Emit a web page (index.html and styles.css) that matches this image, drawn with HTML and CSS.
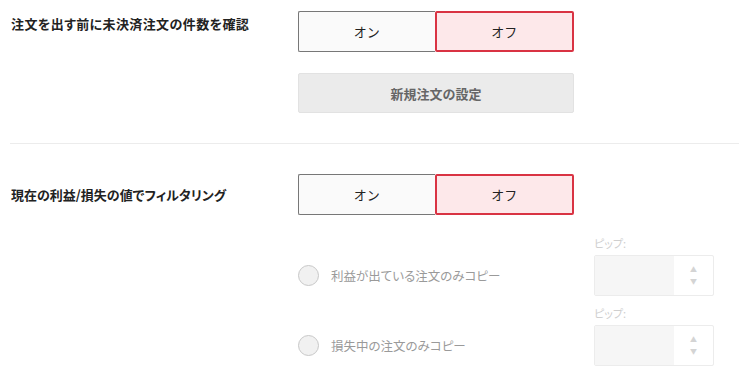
FILE: index.html
```html
<!DOCTYPE html>
<html lang="ja">
<head>
<meta charset="utf-8">
<link rel="stylesheet" href="styles.css">
</head>
<body>
<div class="page">
  <section class="block first">
    <div class="row">
      <div class="label top wide-label">注文を出す前に未決済注文の件数を確認</div>
      <div class="controls">
        <div class="toggle">
          <button class="opt">オン</button>
          <button class="opt active">オフ</button>
        </div>
        <button class="wide">新規注文の設定</button>
      </div>
    </div>
  </section>
  <hr class="divider">
  <section class="block second">
    <div class="row center">
      <div class="label">現在の利益/損失の値でフィルタリング</div>
      <div class="controls">
        <div class="toggle">
          <button class="opt">オン</button>
          <button class="opt active">オフ</button>
        </div>
      </div>
    </div>
    <div class="radios">
      <div class="radio-row">
        <div class="radio-item">
          <span class="circle"></span>
          <span class="radio-text">利益が出ている注文のみコピー</span>
        </div>
        <div class="spin-field">
          <div class="spin-label">ピップ:</div>
          <div class="spin">
            <div class="spin-value"></div>
            <div class="spin-arrows"><span>&#9650;</span><span>&#9660;</span></div>
          </div>
        </div>
      </div>
      <div class="radio-row">
        <div class="radio-item">
          <span class="circle"></span>
          <span class="radio-text">損失中の注文のみコピー</span>
        </div>
        <div class="spin-field">
          <div class="spin-label">ピップ:</div>
          <div class="spin">
            <div class="spin-value"></div>
            <div class="spin-arrows"><span>&#9650;</span><span>&#9660;</span></div>
          </div>
        </div>
      </div>
    </div>
  </section>
</div>
</body>
</html>
```

FILE: styles.css
```css
* { box-sizing: border-box; }
html, body { margin: 0; padding: 0; background: #fff; }
body {
  font-family: "Noto Sans CJK JP", "Noto Sans", sans-serif;
  color: #222;
  font-size: 13px;
}
.page { width: 739px; height: 381px; overflow: hidden; }

.block.first { padding: 11px 0 0 0; }
.row { display: flex; align-items: flex-start; }
.row.center { align-items: center; }
.label {
  width: 298px;
  padding-left: 11px;
  font-weight: 700;
  font-size: 13px;
  line-height: 20px;
  color: #222;
  font-feature-settings: "palt";
}
.label.wide-label { letter-spacing: 0.4px; }
.label.top { padding-top: 3px; }
.controls { width: 276px; display: flex; flex-direction: column; gap: 21px; }

.toggle { display: flex; height: 41px; }
.opt {
  flex: 1;
  font-family: inherit;
  font-size: 13px;
  font-weight: 400;
  color: #222;
  background: #fafafa;
  border: 1px solid #777;
  margin: 0;
  padding: 0;
}
.opt:first-child { border-right: none; border-radius: 2px 0 0 2px; }
.opt.active {
  background: #fde8ea;
  border: 2px solid #d93343;
  border-radius: 2px;
}

.wide {
  height: 40px;
  font-family: inherit;
  font-size: 13px;
  font-weight: 700;
  color: #666;
  background: #ebebeb;
  border: 1px solid #e2e2e2;
  border-radius: 2px;
  margin: 0;
}

.divider {
  border: none;
  border-top: 1px solid #ececec;
  margin: 30px 0 30px 10px;
  height: 0;
}

.radios { padding-left: 298px; margin-top: 21px; display: flex; flex-direction: column; gap: 10px; }
.radio-row { display: flex; align-items: flex-end; }
.radio-item { width: 296px; height: 41px; display: flex; align-items: center; gap: 12px; }
.circle {
  width: 21px; height: 21px;
  border-radius: 50%;
  border: 1px solid #c8c8c8;
  background: #f1f1f1;
}
.radio-text { color: #9a9a9a; font-size: 12.5px; font-feature-settings: "palt"; }

.spin-field { width: 120px; }
.spin-label { color: #cfcfcf; font-size: 11px; line-height: 14px; margin-bottom: 5px; font-feature-settings: "palt"; }
.spin {
  height: 41px;
  display: flex;
  border: 1px solid #ececec;
  border-radius: 2px;
  background: #fff;
}
.spin-value { flex: 1; background: #f6f6f6; }
.spin-arrows {
  width: 39px;
  display: flex;
  flex-direction: column;
  align-items: center;
  justify-content: center;
  gap: 3px;
  color: #d4d4d4;
  font-size: 7px;
  line-height: 9px;
}
```
